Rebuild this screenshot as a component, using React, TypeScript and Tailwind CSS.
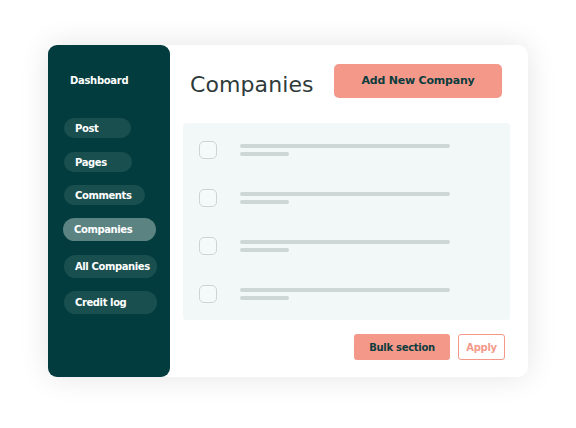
const navItems = [
  { label: "Post", w: "w-[67px]", h: "h-[20px]", mt: "mt-[30px]", active: false },
  { label: "Pages", w: "w-[68px]", h: "h-[20px]", mt: "mt-[14px]", active: false },
  { label: "Comments", w: "w-[81px]", h: "h-[20px]", mt: "mt-[13px]", active: false },
  { label: "Companies", w: "w-[93px]", h: "h-[23px]", mt: "mt-[13px]", active: true },
  { label: "All Companies", w: "w-[93px]", h: "h-[23px]", mt: "mt-[14px]", active: false },
  { label: "Credit log", w: "w-[93px]", h: "h-[23px]", mt: "mt-[13px]", active: false },
];

const font = { fontFamily: "'DejaVu Sans', 'Noto Sans', sans-serif" };

function Sidebar() {
  return (
    <aside className="flex w-[122px] shrink-0 flex-col rounded-[9px] bg-[#023c3e] pl-[16px] pt-[29px]">
      <p className="pl-[6px] text-[10px] font-bold leading-[14px] tracking-[-0.3px] text-white">
        Dashboard
      </p>
      {navItems.map((item) => (
        <div
          key={item.label}
          className={`${item.w} ${item.h} ${item.mt} flex items-center rounded-full pl-[11px] text-[10px] font-bold tracking-[-0.4px] text-white ${
            item.active ? "bg-[#5b8382] -ml-[1px]" : "bg-[#1a4f4f]"
          }`}
        >
          {item.label}
        </div>
      ))}
    </aside>
  );
}

function Row() {
  return (
    <div className="flex h-[48px] items-start">
      <div className="h-[18px] w-[18px] rounded-[5px] border-[1.5px] border-[#cbd6d4] bg-[#f4f9f9]" />
      <div className="ml-[23px] mt-[3px] flex flex-col gap-[4px]">
        <div className="h-[4px] w-[210px] rounded-full bg-[#cdd8d6]" />
        <div className="h-[4px] w-[49px] rounded-full bg-[#cdd8d6]" />
      </div>
    </div>
  );
}

export default function App() {
  return (
    <div className="h-[428px] w-[576px] bg-white pl-[48px] pt-[45px]" style={font}>
      <div className="flex h-[332px] w-[480px] rounded-[10px] bg-white shadow-[0_0_30px_rgba(0,0,0,0.11)]">
        <Sidebar />
        <main className="flex flex-1 flex-col pl-[13px] pr-[18px]">
          <div className="mt-[19px] flex h-[34px] items-center">
            <h1 className="ml-[7px] mt-[6px] text-[22px] font-normal tracking-[0.1px] text-[#2f3b3b]">
              Companies
            </h1>
            <button className="ml-auto mr-[8px] h-[34px] w-[168px] rounded-[5px] bg-[#f4998a] text-[11px] font-bold tracking-[-0.2px] text-[#0c3c3d]">
              Add New Company
            </button>
          </div>
          <div className="mt-[25px] h-[197px] rounded-[3px] bg-[#f2f8f8] pl-[16px] pt-[18px]">
            <Row />
            <Row />
            <Row />
            <Row />
          </div>
          <div className="mt-[14px] flex justify-end gap-[8px] pr-[5px]">
            <button className="h-[26px] w-[96px] rounded-[3px] bg-[#f4998a] text-[10px] font-bold tracking-[-0.3px] text-[#0c3c3d]">
              Bulk section
            </button>
            <button className="h-[26px] w-[47px] rounded-[3px] border border-[#f4998a] bg-white text-[10px] font-bold tracking-[-0.3px] text-[#f4998a]">
              Apply
            </button>
          </div>
        </main>
      </div>
    </div>
  );
}
